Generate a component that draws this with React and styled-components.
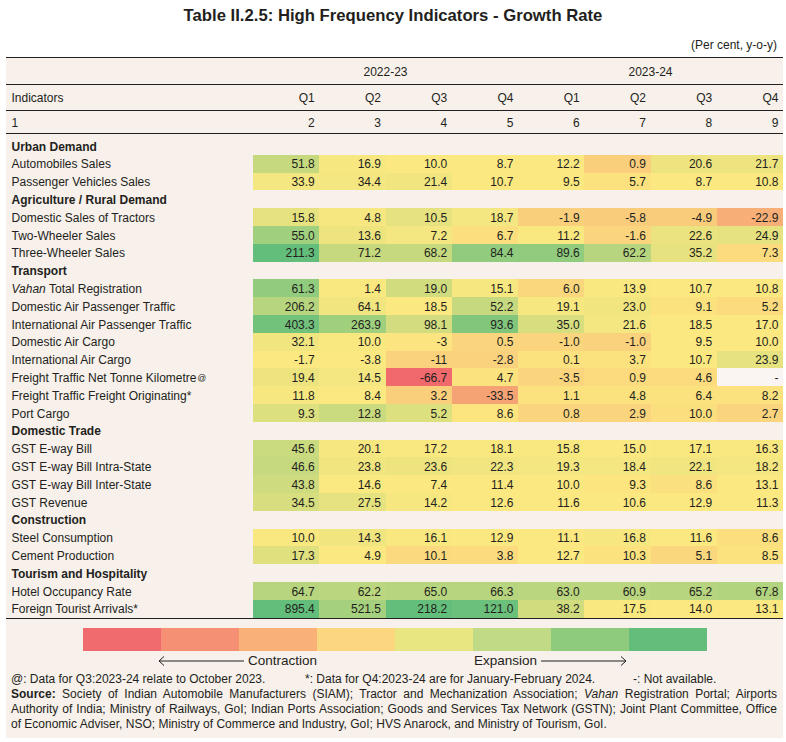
import React from "react";
import styled, { createGlobalStyle } from "styled-components";

const GlobalStyle = createGlobalStyle`
  html, body { margin: 0; padding: 0; background: #ffffff; }
  body {
    font-family: "Liberation Sans", Arial, Helvetica, sans-serif;
    color: #231f20;
  }
  * { box-sizing: border-box; }
`;

const INK = "#231f20";
const RED = [240, 105, 108];
const YEL = [252, 232, 128];
const GRN = [99, 190, 123];

function scale(t) {
  if (t === null) return "#faf5f2";
  const a = YEL;
  const b = t < 0 ? RED : GRN;
  const k = Math.min(1, Math.abs(t));
  const c = a.map((v, i) => Math.round(v + (b[i] - v) * k));
  return `rgb(${c[0]}, ${c[1]}, ${c[2]})`;
}

const Page = styled.div`
  width: 786px;
  padding-left: 6px;
`;

const Title = styled.h1`
  margin: 0 0 0 -6px;
  width: 786px;
  height: 32px;
  line-height: 32px;
  font-size: 16.7px;
  font-weight: bold;
  text-align: center;
`;

const Unit = styled.div`
  width: 777px;
  height: 25px;
  line-height: 26px;
  padding-right: 6px;
  text-align: right;
  font-size: 12px;
`;

const Panel = styled.div`
  width: 777px;
  background: #f7f0eb;
  border-top: 1px solid ${INK};
  padding-bottom: 6px;
  font-size: 12px;
`;

const HeadRow = styled.div`
  display: flex;
  align-items: center;
  height: ${(p) => p.$h}px;
  padding-top: 1px;
  border-bottom: 1px solid ${INK};
`;

const LabelCell = styled.div`
  width: 247px;
  flex: none;
  padding-left: 5.5px;
  display: flex;
  align-items: center;
  white-space: nowrap;
  font-weight: ${(p) => (p.$bold ? "bold" : "normal")};
`;

const RowLabel = styled(LabelCell)`
  padding-top: 1.5px;
`;

const YearCell = styled.div`
  width: 265px;
  flex: none;
  text-align: center;
`;

const HeadValue = styled.div`
  width: 66.25px;
  flex: none;
  text-align: right;
  padding-right: 4.5px;
`;

const Body = styled.div`
  padding-top: 3px;
  border-bottom: 1px solid ${INK};
`;

const Row = styled.div`
  display: flex;
  align-items: stretch;
  height: 17.8px;
`;

const ValueCell = styled.div`
  width: 66.25px;
  flex: none;
  display: flex;
  align-items: center;
  justify-content: flex-end;
  padding: 1.5px 4.5px 0 0;
  background: ${(p) => p.$bg};
`;

const Sup = styled.sup`
  font-size: 8.5px;
  vertical-align: 4px;
  line-height: 0;
  margin-left: 1px;
`;

const Legend = styled.div`
  display: flex;
  width: 624px;
  height: 23px;
  margin: 9px auto 0;
`;

const Swatch = styled.div`
  flex: 1;
  background: ${(p) => p.$c};
`;

const ArrowRow = styled.div`
  display: flex;
  align-items: center;
  height: 20px;
  margin-left: 152px;
  font-size: 13.5px;
`;

const ArrowGroup = styled.div`
  display: flex;
  align-items: center;
  gap: ${(p) => p.$gap}px;
  margin-right: ${(p) => p.$mr || 0}px;
`;

const Notes = styled.div`
  display: flex;
  margin-top: 1.5px;
  padding-left: 5px;
  line-height: 15px;
  white-space: nowrap;
`;

const Note = styled.span`
  width: ${(p) => (p.$w ? `${p.$w}px` : "auto")};
  flex: none;
`;

const Source = styled.div`
  padding: 0 6px 0 5px;
  line-height: 15px;
`;

const SourceLine = styled.div`
  text-align: ${(p) => (p.$justify ? "justify" : "left")};
  text-align-last: ${(p) => (p.$justify ? "justify" : "left")};
`;

const Arrow = ({ dir }) => (
  <svg width="86" height="10" viewBox="0 0 86 10">
    {dir === "left" ? (
      <>
        <line x1="1" y1="5" x2="86" y2="5" stroke={INK} strokeWidth="1" />
        <polyline points="6,0.5 1,5 6,9.5" fill="none" stroke={INK} strokeWidth="1" />
      </>
    ) : (
      <>
        <line x1="0" y1="5" x2="85" y2="5" stroke={INK} strokeWidth="1" />
        <polyline points="80,0.5 85,5 80,9.5" fill="none" stroke={INK} strokeWidth="1" />
      </>
    )}
  </svg>
);

const sections = [
  {
    title: "Urban Demand",
    rows: [
      { label: "Automobiles Sales", v: [["51.8", 0.35], ["16.9", 0.03], ["10.0", 0], ["8.7", 0], ["12.2", 0], ["0.9", -0.2], ["20.6", 0.1], ["21.7", 0.1]] },
      { label: "Passenger Vehicles Sales", v: [["33.9", 0.05], ["34.4", 0.05], ["21.4", 0.07], ["10.7", 0], ["9.5", 0], ["5.7", -0.05], ["8.7", 0], ["10.8", 0]] },
    ],
  },
  {
    title: "Agriculture / Rural Demand",
    rows: [
      { label: "Domestic Sales of Tractors", v: [["15.8", 0.15], ["4.8", 0.03], ["10.5", 0.15], ["18.7", 0.05], ["-1.9", -0.2], ["-5.8", -0.22], ["-4.9", -0.22], ["-22.9", -0.45]] },
      { label: "Two-Wheeler Sales", v: [["55.0", 0.6], ["13.6", 0.1], ["7.2", 0.05], ["6.7", -0.08], ["11.2", 0.02], ["-1.6", -0.15], ["22.6", 0.12], ["24.9", 0.15]] },
      { label: "Three-Wheeler Sales", v: [["211.3", 1], ["71.2", 0.35], ["68.2", 0.35], ["84.4", 0.7], ["89.6", 0.7], ["62.2", 0.45], ["35.2", 0.15], ["7.3", -0.1]] },
    ],
  },
  {
    title: "Transport",
    rows: [
      { label: <><i>Vahan</i>&nbsp;Total Registration</>, v: [["61.3", 0.7], ["1.4", 0.02], ["19.0", 0.28], ["15.1", 0.03], ["6.0", -0.13], ["13.9", 0.02], ["10.7", 0], ["10.8", 0]] },
      { label: "Domestic Air Passenger Traffic", v: [["206.2", 0.45], ["64.1", 0.07], ["18.5", 0], ["52.2", 0.35], ["19.1", 0.03], ["23.0", 0.07], ["9.1", -0.05], ["5.2", -0.1]] },
      { label: "International Air Passenger Traffic", v: [["403.3", 0.9], ["263.9", 0.6], ["98.1", 0.27], ["93.6", 0.8], ["35.0", 0.25], ["21.6", 0.05], ["18.5", 0], ["17.0", 0]] },
      { label: "Domestic Air Cargo", v: [["32.1", 0.07], ["10.0", 0.02], ["-3", -0.02], ["0.5", -0.15], ["-1.0", -0.15], ["-1.0", -0.18], ["9.5", 0], ["10.0", 0]] },
      { label: "International Air Cargo", v: [["-1.7", 0], ["-3.8", 0], ["-11", -0.17], ["-2.8", -0.18], ["0.1", -0.05], ["3.7", -0.05], ["10.7", 0], ["23.9", 0.15]] },
      { label: <>Freight Traffic Net Tonne Kilometre<Sup>@</Sup></>, v: [["19.4", 0.1], ["14.5", 0.05], ["-66.7", -1], ["4.7", -0.05], ["-3.5", -0.15], ["0.9", -0.1], ["4.6", -0.1], ["-", null]] },
      { label: "Freight Traffic Freight Originating*", v: [["11.8", 0.03], ["8.4", 0], ["3.2", -0.2], ["-33.5", -0.55], ["1.1", -0.05], ["4.8", -0.05], ["6.4", -0.05], ["8.2", -0.05]] },
      { label: "Port Cargo", v: [["9.3", 0.2], ["12.8", 0.33], ["5.2", 0.2], ["8.6", -0.03], ["0.8", -0.15], ["2.9", -0.15], ["10.0", -0.07], ["2.7", -0.15]] },
    ],
  },
  {
    title: "Domestic Trade",
    rows: [
      { label: "GST E-way Bill", v: [["45.6", 0.33], ["20.1", 0.03], ["17.2", 0.02], ["18.1", 0.02], ["15.8", 0.02], ["15.0", 0], ["17.1", 0.02], ["16.3", 0.02]] },
      { label: "GST E-way Bill Intra-State", v: [["46.6", 0.35], ["23.8", 0.07], ["23.6", 0.1], ["22.3", 0.08], ["19.3", 0.05], ["18.4", 0.05], ["22.1", 0.08], ["18.2", 0.05]] },
      { label: "GST E-way Bill Inter-State", v: [["43.8", 0.3], ["14.6", 0.01], ["7.4", 0], ["11.4", 0], ["10.0", 0], ["9.3", -0.03], ["8.6", -0.06], ["13.1", 0]] },
      { label: "GST Revenue", v: [["34.5", 0.25], ["27.5", 0.15], ["14.2", 0.03], ["12.6", 0], ["11.6", 0], ["10.6", 0], ["12.9", 0], ["11.3", 0]] },
    ],
  },
  {
    title: "Construction",
    rows: [
      { label: "Steel Consumption", v: [["10.0", 0.02], ["14.3", 0.07], ["16.1", 0.02], ["12.9", 0], ["11.1", 0], ["16.8", 0.03], ["11.6", 0], ["8.6", -0.08]] },
      { label: "Cement Production", v: [["17.3", 0.18], ["4.9", 0], ["10.1", -0.12], ["3.8", -0.1], ["12.7", 0], ["10.3", -0.05], ["5.1", -0.13], ["8.5", -0.05]] },
    ],
  },
  {
    title: "Tourism and Hospitality",
    rows: [
      { label: "Hotel Occupancy Rate", v: [["64.7", 0.45], ["62.2", 0.43], ["65.0", 0.45], ["66.3", 0.45], ["63.0", 0.43], ["60.9", 0.43], ["65.2", 0.45], ["67.8", 0.48]] },
      { label: "Foreign Tourist Arrivals*", v: [["895.4", 1], ["521.5", 0.57], ["218.2", 1], ["121.0", 0.95], ["38.2", 0.28], ["17.5", 0.02], ["14.0", 0], ["13.1", 0]] },
    ],
  },
];

const legendColors = ["#f06b6e", "#f59074", "#fab178", "#fcd77f", "#e8e681", "#c0da85", "#8ecb7d", "#65bd7c"];
const quarters = ["Q1", "Q2", "Q3", "Q4", "Q1", "Q2", "Q3", "Q4"];

export default function App() {
  return (
    <>
      <GlobalStyle />
      <Page>
        <Title>Table II.2.5: High Frequency Indicators - Growth Rate</Title>
        <Unit>(Per cent, y-o-y)</Unit>
        <Panel>
          <HeadRow $h={27}>
            <LabelCell />
            <YearCell>2022-23</YearCell>
            <YearCell>2023-24</YearCell>
          </HeadRow>
          <HeadRow $h={26}>
            <LabelCell>Indicators</LabelCell>
            {quarters.map((q, i) => (
              <HeadValue key={i}>{q}</HeadValue>
            ))}
          </HeadRow>
          <HeadRow $h={23}>
            <LabelCell>1</LabelCell>
            {quarters.map((q, i) => (
              <HeadValue key={i}>{i + 2}</HeadValue>
            ))}
          </HeadRow>
          <Body>
            {sections.map((s) => (
              <React.Fragment key={s.title}>
                <Row>
                  <RowLabel $bold>{s.title}</RowLabel>
                </Row>
                {s.rows.map((r, ri) => (
                  <Row key={ri}>
                    <RowLabel>{r.label}</RowLabel>
                    {r.v.map(([txt, t], ci) => (
                      <ValueCell key={ci} $bg={scale(t)}>
                        {txt}
                      </ValueCell>
                    ))}
                  </Row>
                ))}
              </React.Fragment>
            ))}
          </Body>
          <Legend>
            {legendColors.map((c) => (
              <Swatch key={c} $c={c} />
            ))}
          </Legend>
          <ArrowRow>
            <ArrowGroup $gap={4} $mr={157}>
              <Arrow dir="left" />
              <span>Contraction</span>
            </ArrowGroup>
            <ArrowGroup $gap={4}>
              <span>Expansion</span>
              <Arrow dir="right" />
            </ArrowGroup>
          </ArrowRow>
          <Notes>
            <Note $w={294}>@: Data for Q3:2023-24 relate to October 2023.</Note>
            <Note $w={328}>*: Data for Q4:2023-24 are for January-February 2024.</Note>
            <Note>-: Not available.</Note>
          </Notes>
          <Source>
            <SourceLine $justify>
              <b>Source:</b> Society of Indian Automobile Manufacturers (SIAM); Tractor and Mechanization Association; <i>Vahan</i> Registration Portal; Airports
            </SourceLine>
            <SourceLine $justify>
              Authority of India; Ministry of Railways, GoI; Indian Ports Association; Goods and Services Tax Network (GSTN); Joint Plant Committee, Office
            </SourceLine>
            <SourceLine>
              of Economic Adviser, NSO; Ministry of Commerce and Industry, GoI; HVS Anarock, and Ministry of Tourism, GoI.
            </SourceLine>
          </Source>
        </Panel>
      </Page>
    </>
  );
}
